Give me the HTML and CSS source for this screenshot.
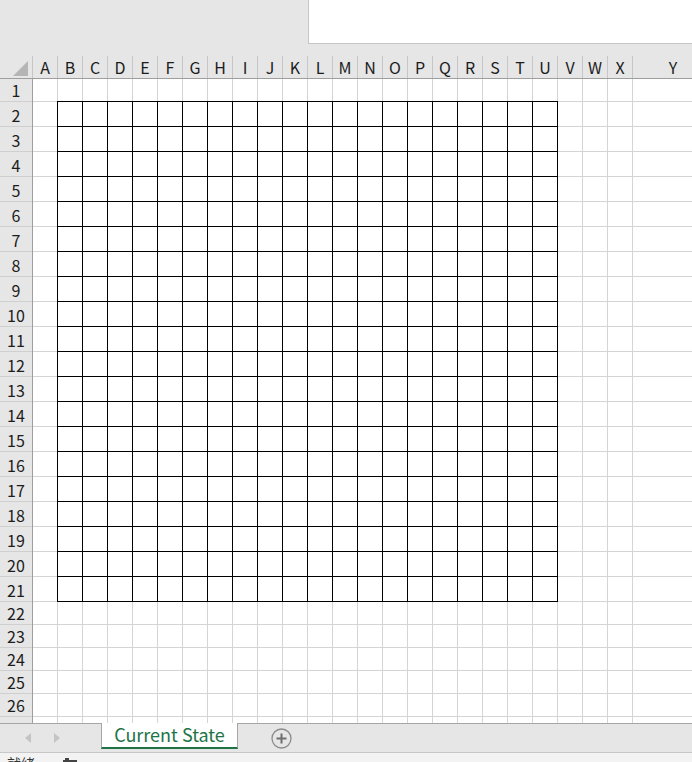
FILE: index.html
```html
<!DOCTYPE html>
<html lang="zh-CN">
<head>
<meta charset="utf-8">
<title>Sheet</title>
<link rel="stylesheet" href="styles.css">
</head>
<body>
<div class="top"><div class="fbox"></div></div>
<div class="colhead">
  <div class="corner"><svg width="15" height="15" viewBox="0 0 15 15"><polygon points="15,0 15,15 0,15" fill="#b5b5b5"/></svg></div>
  <div class="ch">A</div><div class="ch">B</div><div class="ch">C</div><div class="ch">D</div><div class="ch">E</div><div class="ch">F</div><div class="ch">G</div><div class="ch">H</div><div class="ch">I</div><div class="ch">J</div><div class="ch">K</div><div class="ch">L</div><div class="ch">M</div><div class="ch">N</div><div class="ch">O</div><div class="ch">P</div><div class="ch">Q</div><div class="ch">R</div><div class="ch">S</div><div class="ch">T</div><div class="ch">U</div><div class="ch">V</div><div class="ch">W</div><div class="ch">X</div><div class="ch y">Y</div>
</div>
<div class="body">
  <div class="rows">
    <div class="rn">1</div>
    <div class="rn t">2</div><div class="rn t">3</div><div class="rn t">4</div><div class="rn t">5</div><div class="rn t">6</div><div class="rn t">7</div><div class="rn t">8</div><div class="rn t">9</div><div class="rn t">10</div><div class="rn t">11</div><div class="rn t">12</div><div class="rn t">13</div><div class="rn t">14</div><div class="rn t">15</div><div class="rn t">16</div><div class="rn t">17</div><div class="rn t">18</div><div class="rn t">19</div><div class="rn t">20</div><div class="rn t">21</div>
    <div class="rn">22</div><div class="rn">23</div><div class="rn">24</div><div class="rn">25</div><div class="rn">26</div><div class="rn"></div>
  </div>
  <div class="cells">
    <div class="r1"></div>
    <div class="mid">
      <div class="side a"></div>
      <div class="block"></div>
      <div class="side b"></div>
    </div>
    <div class="lower"></div>
  </div>
</div>
<div class="tabs">
  <div class="nav">
    <svg width="6" height="10" viewBox="0 0 6 10"><polygon points="6,0 6,10 0,5" fill="#c4c4c4"/></svg>
    <svg width="6" height="10" viewBox="0 0 6 10"><polygon points="0,0 0,10 6,5" fill="#c4c4c4"/></svg>
  </div>
  <div class="tab">Current State</div>
  <div class="rest">
    <svg class="add" width="21" height="21" viewBox="0 0 21 21"><circle cx="10.5" cy="10.5" r="9.5" fill="none" stroke="#8c8c8c" stroke-width="1.3"/><path d="M10.5 5.5v10M5.5 10.5h10" stroke="#6e6e6e" stroke-width="2"/></svg>
  </div>
</div>
<div class="status">
  <span class="ready">就绪</span>
  <svg class="macro" width="16" height="10" viewBox="0 0 16 10"><rect x="1" y="3" width="14" height="7" fill="#444"/><rect x="3" y="1" width="4" height="3" fill="#444"/></svg>
</div>
</body>
</html>
```
FILE: styles.css
```css
* { box-sizing: border-box; margin: 0; padding: 0; }
html, body { width: 692px; height: 762px; overflow: hidden; }
body {
  background: #e6e6e6;
  font-family: "Noto Sans CJK SC", "Noto Sans", sans-serif;
  color: #1c1c1c;
}
.top { height: 56px; display: flex; justify-content: flex-end; }
.fbox {
  width: 384px; height: 44px; background: #fff;
  border-left: 1px solid #c6c6c6; border-bottom: 1px solid #c6c6c6;
}
.colhead { height: 23px; display: flex; border-bottom: 1px solid #9e9e9e; }
.corner {
  width: 33px; flex: none; border-right: 1px solid #c6c6c6;
  display: flex; justify-content: flex-end; align-items: flex-end;
  padding: 0 4px 2px 0;
}
.corner svg { display: block; }
.ch {
  width: 25px; flex: none; border-right: 1px solid #c6c6c6;
  display: flex; align-items: center; justify-content: center;
  font-size: 16px; line-height: 1;
}
.ch.y { width: 80px; border-right: 0; }
.body { display: flex; height: 644px; overflow: hidden; }
.rows {
  width: 33px; flex: none; border-right: 1px solid #9e9e9e;
  display: flex; flex-direction: column; overflow: hidden;
}
.rn {
  height: 23px; flex: none; border-bottom: 1px solid #cfcfcf;
  text-align: center; font-size: 16px; line-height: 23px;
}
.rn.t { height: 25px; line-height: 26px; }
.cells {
  flex: 1; display: flex; flex-direction: column;
  background:
    repeating-linear-gradient(90deg, transparent 0 24px, #d4d4d4 24px 25px) 0 0 / 600px 100% no-repeat,
    #fff;
}
.r1 { height: 22px; flex: none; }
.mid { height: 501px; flex: none; display: flex; }
.side { background: repeating-linear-gradient(180deg, #d4d4d4 0 1px, transparent 1px 25px); }
.side.a { width: 24px; flex: none; }
.side.b { flex: 1; }
.block {
  width: 501px; flex: none;
  background:
    repeating-linear-gradient(90deg, #000 0 1px, transparent 1px 25px),
    repeating-linear-gradient(180deg, #000 0 1px, transparent 1px 25px);
}
.lower { flex: 1; background: repeating-linear-gradient(180deg, transparent 0 22px, #d4d4d4 22px 23px); }
.tabs { height: 30px; display: flex; align-items: flex-start; border-bottom: 1px solid #c8c8c8; }
.nav {
  width: 101px; height: 29px; border-top: 1px solid #a6a6a6;
  display: flex; align-items: center; gap: 23px; padding-left: 25px;
}
.nav svg { display: block; }
.tab {
  width: 137px; height: 26px; flex: none; background: #fff;
  border-left: 1px solid #a6a6a6; border-right: 1px solid #a6a6a6;
  border-bottom: 2px solid #217346;
  color: #217346; font-size: 18px; line-height: 22px; text-align: center;
}
.rest {
  flex: 1; height: 29px; border-top: 1px solid #a6a6a6;
  display: flex; align-items: center; padding-left: 33px;
}
.add { display: block; }
.status {
  height: 9px; background: #f3f3f3; overflow: hidden;
  display: flex; align-items: flex-start; padding: 3px 0 0 7px;
}
.ready { font-size: 14px; line-height: 14px; color: #333; }
.macro { margin-left: 27px; margin-top: 1px; display: block; }
```
